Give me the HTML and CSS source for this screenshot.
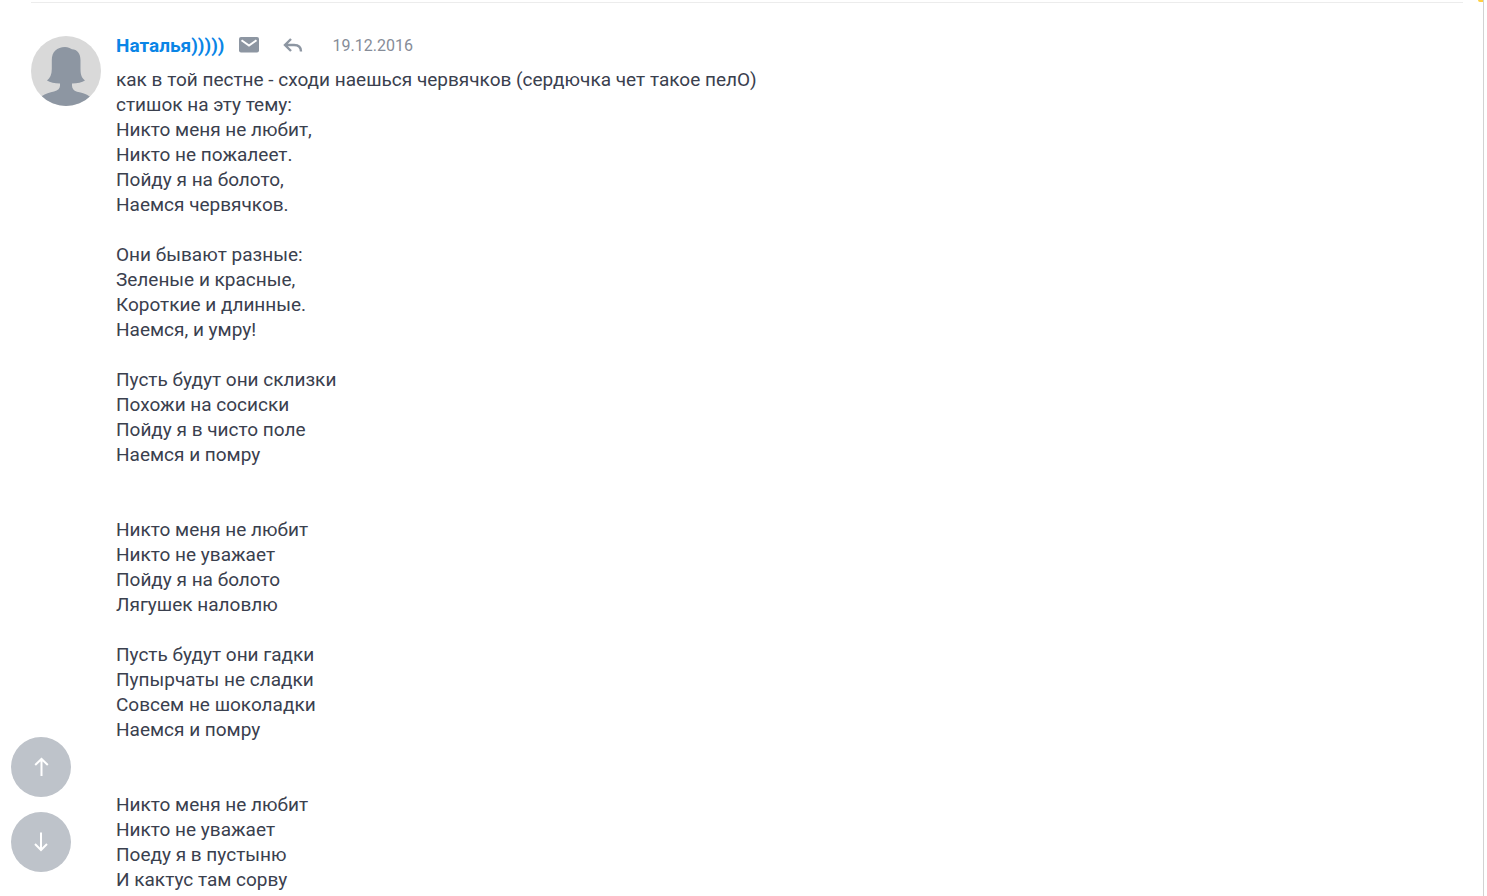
FILE: index.html
```html
<!DOCTYPE html>
<html lang="ru">
<head>
    <meta charset="UTF-8">
    <meta name="viewport" content="width=device-width, initial-scale=1.0">
    <title>Комментарии</title>
    <link rel="stylesheet" href="styles.css">
</head>
<body>
    <main class="page">
        <span class="corner"></span>
        <article class="comment">
            <a href="#" class="avatar" aria-label="Наталья">
                <svg viewBox="0 0 70 70" width="70" height="70">
                    <defs>
                        <clipPath id="round"><circle cx="35" cy="35" r="35"/></clipPath>
                    </defs>
                    <g clip-path="url(#round)">
                        <rect width="70" height="70" fill="#d9d9d9"/>
                        <path fill="#8d96a2" d="M34 11c3 0 5 1 7 2.300c5 0 8.500 4 8.500 11v9c0 6 1.500 9 4.500 11.200c-3 2-7.500 3-13 3v2c0 3 1.500 5 5 6.300c5 1.200 9 2 13 5v11H11V60c3-2.500 8-3.500 12-4.500c4-1 6-3 6-6v-2c-5.500 0-10-1-13-3c3-2.500 4.800-6 4.800-11.500v-9c0-8 5.200-13 13.200-13z"/>
                    </g>
                </svg>
            </a>
            <div class="content">
                <header class="head">
                    <a href="#" class="name">Наталья)))))</a>
                    <button type="button" class="icon" aria-label="Написать сообщение">
                        <svg viewBox="0 0 20 16" width="20" height="16">
                            <rect width="20" height="15.500" rx="2" fill="#8d96a2"/>
                            <path d="M2.500 3.200l7.500 5.300l7.500-5.300" fill="none" stroke="#fff" stroke-width="2"/>
                        </svg>
                    </button>
                    <button type="button" class="icon reply" aria-label="Ответить">
                        <svg viewBox="0 0 20 16" width="20" height="16">
                            <path d="M8 2L2 8l6 6M2 8h9c4 0 7 2 7 6.500" fill="none" stroke="#8d96a2" stroke-width="2.400"/>
                        </svg>
                    </button>
                    <time class="date" datetime="2016-12-19">19.12.2016</time>
                </header>
                <p class="text">как в той пестне - сходи наешься червячков (сердючка чет такое пелО)
стишок на эту тему:
Никто меня не любит,
Никто не пожалеет.
Пойду я на болото,
Наемся червячков.

Они бывают разные:
Зеленые и красные,
Короткие и длинные.
Наемся, и умру!

Пусть будут они склизки
Похожи на сосиски
Пойду я в чисто поле
Наемся и помру


Никто меня не любит
Никто не уважает
Пойду я на болото
Лягушек наловлю

Пусть будут они гадки
Пупырчаты не сладки
Совсем не шоколадки
Наемся и помру


Никто меня не любит
Никто не уважает
Поеду я в пустыню
И кактус там сорву</p>
            </div>
        </article>
    </main>

    <nav class="scroll">
        <button type="button" class="scroll-btn" aria-label="Наверх">
            <svg viewBox="0 0 20 20" width="20" height="20">
                <path d="M10.500 19V2M4.200 8l6.300-6l6.300 6"/>
            </svg>
        </button>
        <button type="button" class="scroll-btn" aria-label="Вниз">
            <svg viewBox="0 0 20 20" width="20" height="20">
                <path d="M10 .500V18M4 12l6 6l6-6"/>
            </svg>
        </button>
    </nav>
</body>
</html>
```
FILE: styles.css
```css
body {
    margin: 0;
    background-color: #fff;
    color: #3a404e;
    font-family: Roboto, Arial, sans-serif;
    font-size: 19px;
    line-height: 25px;
}

a {
    color: #0a85e6;
    text-decoration: none;
}

button {
    padding: 0;
    border: none;
    cursor: pointer;
}

.page {
    position: relative;
    box-sizing: border-box;
    min-height: 100vh;
    margin-right: 3px;
    padding: 2px 20px 0 31px;
    border-right: 1px solid #d2d2d2;
}

/* edge of the yellow banner above */
.corner {
    position: absolute;
    top: 0;
    right: 0;
    width: 5px;
    height: 2px;
    background-color: #ffd042;
    border-bottom-left-radius: 2px;
}

.comment {
    display: flex;
    gap: 15px;
    padding-top: 29px;
    border-top: 1px solid #ececec;
}

.avatar {
    flex: none;
    height: 70px;
    margin-top: 4px;
}

.avatar svg {
    display: block;
}

.content {
    flex: 1;
}

.head {
    display: flex;
    align-items: center;
    height: 26px;
    margin-bottom: 9px;
}

.name {
    font-weight: bold;
}

.icon {
    height: 16px;
    margin-left: 14px;
    background: none;
}

.icon svg {
    display: block;
}

.reply {
    margin-left: 24px;
}

.date {
    margin-left: 30px;
    color: #868c98;
    font-size: 16px;
}

.text {
    margin: 0;
    white-space: pre-line;
}

.scroll {
    position: fixed;
    left: 11px;
    bottom: 24px;
    display: flex;
    flex-direction: column;
    gap: 15px;
}

.scroll-btn {
    display: flex;
    align-items: center;
    justify-content: center;
    width: 60px;
    height: 60px;
    border-radius: 50%;
    background-color: #bec3ca;
}

.scroll-btn path {
    fill: none;
    stroke: #fff;
    stroke-width: 2;
}
```
